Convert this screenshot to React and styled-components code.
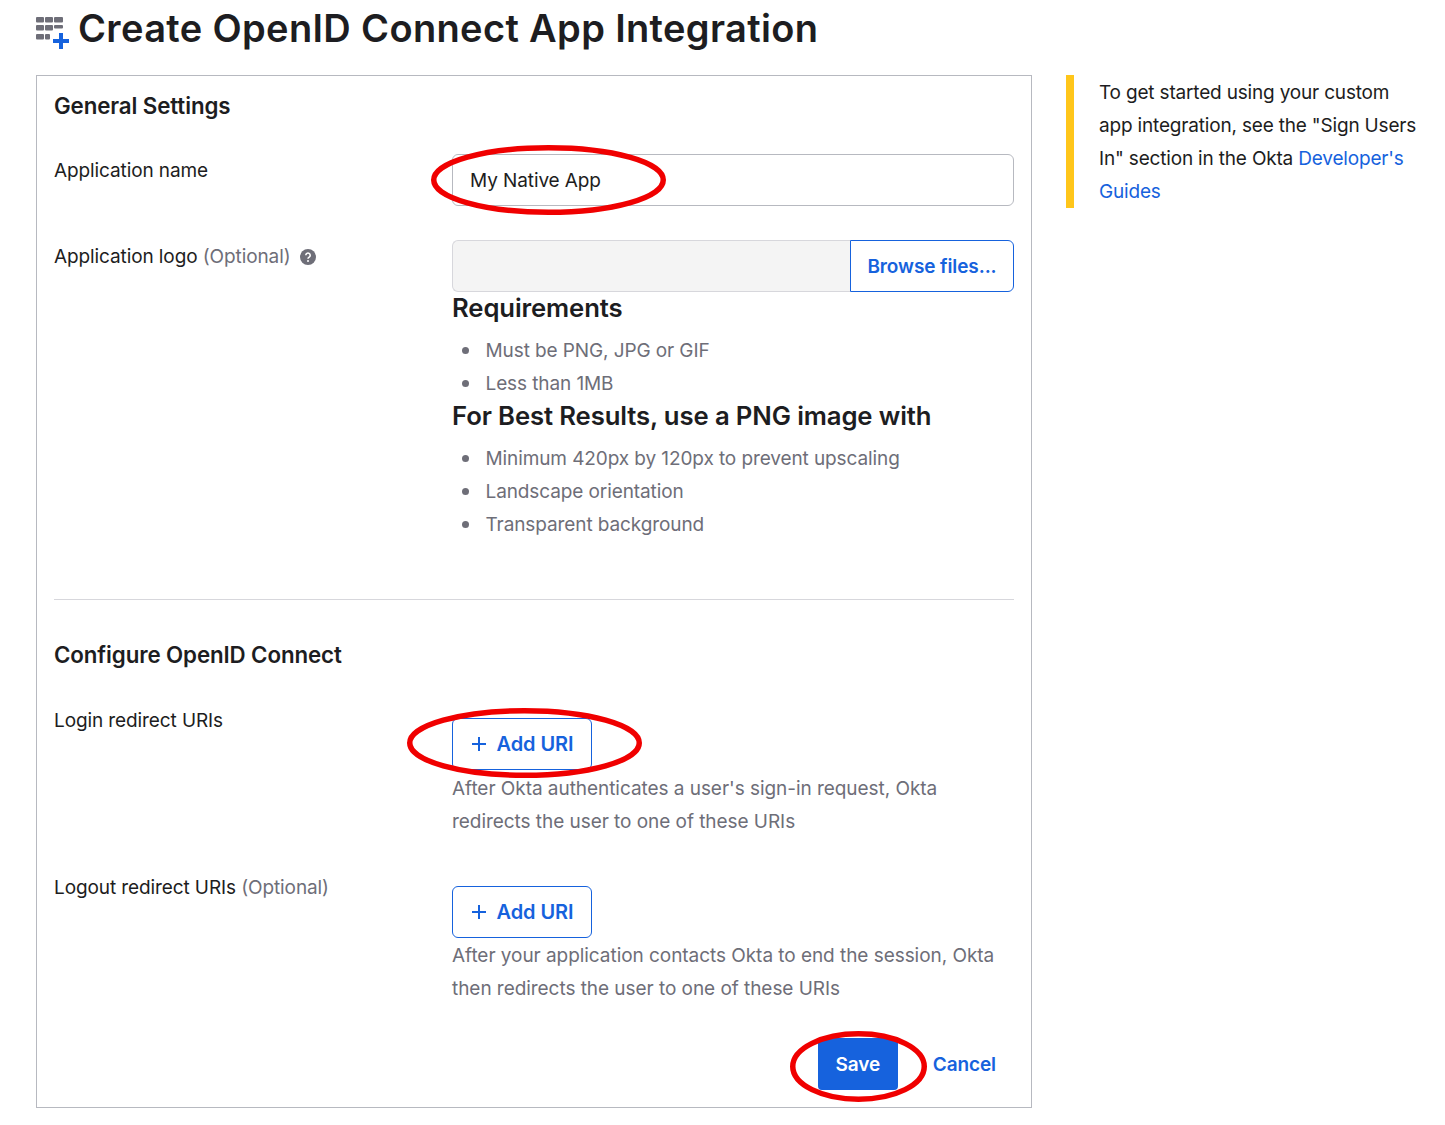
import React from "react";
import styled, { createGlobalStyle } from "styled-components";

const Global = createGlobalStyle`
  html, body { margin: 0; padding: 0; background: #fff; }
  body { font-family: Inter, "Liberation Sans", sans-serif; color: #1d1d21; font-size: 19px; line-height: 33px; letter-spacing: -0.1px; }
  * { box-sizing: border-box; }
`;

const Page = styled.div`
  width: 1445px;
  height: 1125px;
  padding: 0 0 0 36px;
  overflow: hidden;
`;
const TitleBar = styled.header`
  height: 75px;
  display: flex;
  align-items: flex-start;
  gap: 9px;
`;
const TitleIcon = styled.svg`
  width: 33px;
  height: 34px;
  margin-top: 15px;
  flex: none;
`;
const Title = styled.h1`
  margin: 0;
  font-size: 38px;
  line-height: 56px;
  font-weight: 600;
  letter-spacing: 0.35px;
`;
const Columns = styled.div`
  display: flex;
  align-items: flex-start;
  gap: 34px;
`;
const Panel = styled.main`
  width: 996px;
  height: 1033px;
  border: 1px solid #b7b9c0;
  padding: 14px 17px 0;
`;
const SectionTitle = styled.h2`
  margin: 0 0 ${(p) => p.$after}px;
  font-size: 22.3px;
  line-height: 31px;
  font-weight: 600;
  letter-spacing: -0.1px;
`;
const FormRow = styled.div`
  display: grid;
  grid-template-columns: 398px 562px;
  margin-bottom: ${(p) => p.$after || 0}px;
`;
const Label = styled.label`
  display: flex;
  align-items: center;
  align-self: start;
  height: 33px;
  white-space: pre;
`;
const Optional = styled.span`
  color: #6e6e78;
`;
const Field = styled.div`
  position: relative;
  padding-top: ${(p) => p.$top || 0}px;
`;
const Input = styled.div`
  height: 52px;
  border: 1px solid #b7b9c0;
  border-radius: 6px;
  padding: 0 17px;
  display: flex;
  align-items: center;
  font-size: 19px;
`;
const FilePicker = styled.div`
  display: flex;
  height: 52px;
`;
const FileBox = styled.div`
  flex: 1;
  background: #f4f4f4;
  border: 1px solid #d7d7dc;
  border-right: 0;
  border-radius: 6px 0 0 6px;
`;
const BrowseButton = styled.button`
  width: 164px;
  background: #fff;
  border: 1px solid #1662dd;
  border-radius: 0 6px 6px 0;
  color: #1662dd;
  font: 600 19px Inter, "Liberation Sans", sans-serif;
  letter-spacing: -0.1px;
  padding: 0;
`;
const ReqTitle = styled.h3`
  margin: 0;
  font-size: 25.7px;
  line-height: 31px;
  font-weight: 600;
  letter-spacing: -0.12px;
`;
const ReqList = styled.ul`
  list-style: none;
  margin: 11px 0 0;
  padding: 0 0 0 10px;
`;
const ReqItem = styled.li`
  display: flex;
  align-items: center;
  gap: 16.5px;
  color: #6e6e78;
  &::before {
    content: "";
    width: 7px;
    height: 7px;
    border-radius: 50%;
    background: #6e6e78;
    flex: none;
  }
`;
const Divider = styled.hr`
  margin: 58px 0 39px;
  border: 0;
  border-top: 1px solid #d7d7dc;
`;
const AddButton = styled.button`
  display: flex;
  align-items: center;
  justify-content: center;
  gap: 10px;
  width: 140px;
  height: 52px;
  background: #fff;
  border: 1px solid #1662dd;
  border-radius: 6px;
  color: #1662dd;
  font: 600 20px Inter, "Liberation Sans", sans-serif;
  letter-spacing: -0.1px;
  padding: 0;
`;
const Help = styled.p`
  margin: ${(p) => p.$top}px 0 ${(p) => 1 - p.$top}px;
  color: #6e6e78;
  letter-spacing: -0.05px;
`;
const Footer = styled.footer`
  display: flex;
  justify-content: flex-end;
  align-items: center;
  gap: 35px;
  margin-top: 33px;
  padding-right: 18px;
  position: relative;
`;
const SaveButton = styled.button`
  width: 80px;
  height: 52px;
  background: #1662dd;
  border: 0;
  border-radius: 4px;
  color: #fff;
  font: 600 19px Inter, "Liberation Sans", sans-serif;
  letter-spacing: -0.1px;
  padding: 0;
`;
const StrongLink = styled.a`
  color: #1662dd;
  font-weight: 600;
`;
const Aside = styled.aside`
  width: 345px;
  height: 133px;
  border-left: 8px solid #ffc61a;
  padding: 1px 0 0 25px;
  font-size: 19px;
  letter-spacing: -0.18px;
  white-space: nowrap;
`;
const Link = styled.a`
  color: #1662dd;
`;
const Ring = styled.svg`
  position: absolute;
  left: ${(p) => p.$left}px;
  top: ${(p) => p.$top}px;
  overflow: visible;
  pointer-events: none;
`;

const Annotation = ({ left, top, w, h }) => (
  <Ring $left={left} $top={top} width={w} height={h}>
    <ellipse cx={w / 2} cy={h / 2} rx={w / 2 - 2.75} ry={h / 2 - 2.75} fill="none" stroke="#f00000" strokeWidth="5.5" />
  </Ring>
);

const Plus = () => (
  <svg width="16" height="16" viewBox="0 0 16 16" fill="none" stroke="#1662dd" strokeWidth="2">
    <path d="M8 1v14M1 8h14" />
  </svg>
);

const HelpDot = () => (
  <svg width="16" height="16" viewBox="0 0 16 16" style={{ marginLeft: 9 }}>
    <circle cx="8" cy="8" r="8" fill="#6e6e78" />
    <path d="M5.8 6.2a2.2 2.2 0 1 1 3.4 1.9c-.8.5-1.2.8-1.2 1.6" fill="none" stroke="#fff" strokeWidth="1.6" />
    <circle cx="8" cy="12" r="1" fill="#fff" />
  </svg>
);

export default function App() {
  return (
    <Page>
      <Global />
      <TitleBar>
        <TitleIcon viewBox="0 0 33 34">
          <g fill="#6e6e78">
            <rect x="0" y="2" width="8" height="5.5" rx="1" />
            <rect x="9" y="2" width="8" height="5.5" rx="1" />
            <rect x="18" y="2" width="9" height="5.5" rx="1" />
            <rect x="0" y="10" width="8" height="5.5" rx="1" />
            <rect x="9" y="10" width="8" height="5.5" rx="1" />
            <rect x="18" y="10" width="9" height="3.5" rx="1" />
            <rect x="0" y="19" width="8" height="5.5" rx="1" />
            <rect x="9" y="19" width="5" height="5.5" rx="1" />
          </g>
          <path d="M25 18v16M17 26h16" stroke="#1662dd" strokeWidth="4" />
        </TitleIcon>
        <Title>Create OpenID Connect App Integration</Title>
      </TitleBar>
      <Columns>
        <Panel>
          <SectionTitle $after={33}>General Settings</SectionTitle>
          <FormRow $after={34}>
            <Label>Application name</Label>
            <Field>
              <Input>My Native App</Input>
              <Annotation left={-21} top={-9} w={235} h={70} />
            </Field>
          </FormRow>
          <FormRow>
            <Label>
              Application logo <Optional>(Optional)</Optional>
              <HelpDot />
            </Label>
            <Field>
              <FilePicker>
                <FileBox />
                <BrowseButton>Browse files...</BrowseButton>
              </FilePicker>
              <ReqTitle>Requirements</ReqTitle>
              <ReqList>
                <ReqItem>Must be PNG, JPG or GIF</ReqItem>
                <ReqItem>Less than 1MB</ReqItem>
              </ReqList>
              <ReqTitle>For Best Results, use a PNG image with</ReqTitle>
              <ReqList>
                <ReqItem>Minimum 420px by 120px to prevent upscaling</ReqItem>
                <ReqItem>Landscape orientation</ReqItem>
                <ReqItem>Transparent background</ReqItem>
              </ReqList>
            </Field>
          </FormRow>
          <Divider />
          <SectionTitle $after={34}>Configure OpenID Connect</SectionTitle>
          <FormRow $after={34}>
            <Label>Login redirect URIs</Label>
            <Field $top={14}>
              <AddButton>
                <Plus />
                Add URI
              </AddButton>
              <Help $top={2}>
                After Okta authenticates a user's sign-in request, Okta
                <br />
                redirects the user to one of these URIs
              </Help>
              <Annotation left={-45} top={4} w={235} h={70} />
            </Field>
          </FormRow>
          <FormRow>
            <Label>
              Logout redirect URIs <Optional>(Optional)</Optional>
            </Label>
            <Field $top={15}>
              <AddButton>
                <Plus />
                Add URI
              </AddButton>
              <Help $top={1}>
                After your application contacts Okta to end the session, Okta
                <br />
                then redirects the user to one of these URIs
              </Help>
            </Field>
          </FormRow>
          <Footer>
            <SaveButton>Save</SaveButton>
            <StrongLink>Cancel</StrongLink>
            <Annotation left={736} top={-7} w={137} h={71} />
          </Footer>
        </Panel>
        <Aside>
          To get started using your custom
          <br />
          app integration, see the "Sign Users
          <br />
          In" section in the Okta <Link>Developer's</Link>
          <br />
          <Link>Guides</Link>
        </Aside>
      </Columns>
    </Page>
  );
}
